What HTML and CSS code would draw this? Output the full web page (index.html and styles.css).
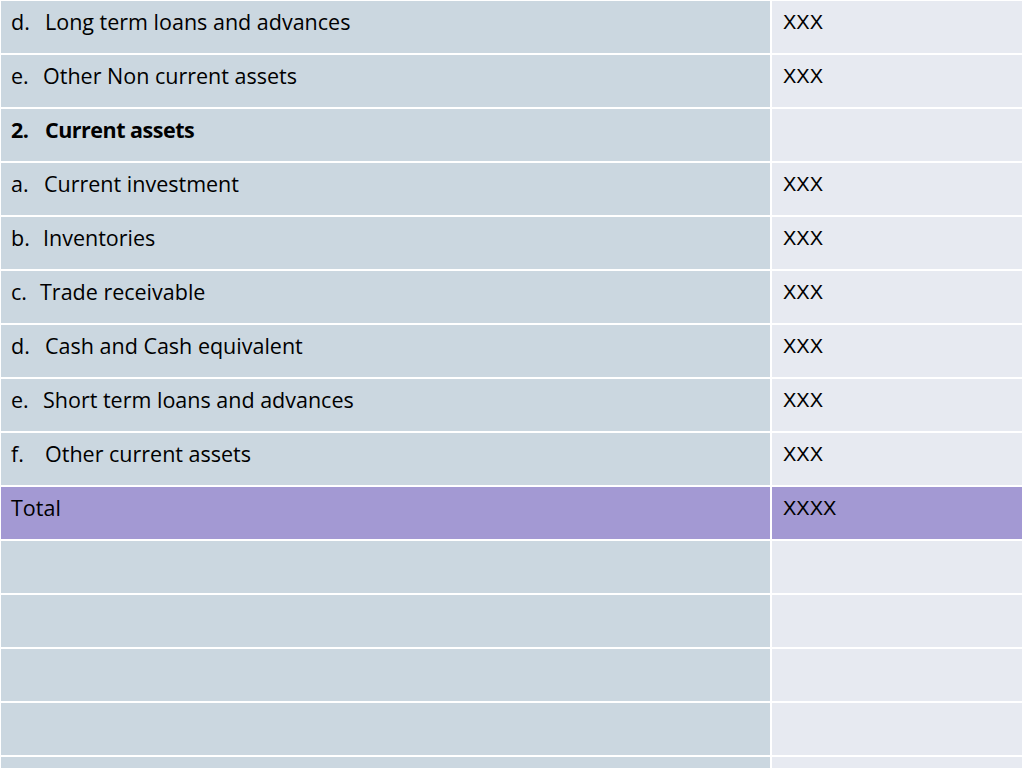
FILE: index.html
```html
<!DOCTYPE html>
<html lang="en">
<head>
<meta charset="utf-8">
<title>Current assets</title>
<link rel="stylesheet" href="styles.css">
</head>
<body>
<div class="table">
  <div class="cell label"><span class="mk">d.</span>Long term loans and advances</div>
  <div class="cell value">XXX</div>

  <div class="cell label"><span class="mk mk-e">e.</span>Other Non current assets</div>
  <div class="cell value">XXX</div>

  <div class="cell label bold"><span class="mk">2.</span>Current assets</div>
  <div class="cell value"></div>

  <div class="cell label"><span class="mk mk-a">a.</span>Current investment</div>
  <div class="cell value">XXX</div>

  <div class="cell label"><span class="mk mk-e">b.</span>Inventories</div>
  <div class="cell value">XXX</div>

  <div class="cell label"><span class="mk mk-c">c.</span>Trade receivable</div>
  <div class="cell value">XXX</div>

  <div class="cell label"><span class="mk">d.</span>Cash and Cash equivalent</div>
  <div class="cell value">XXX</div>

  <div class="cell label"><span class="mk mk-e">e.</span>Short term loans and advances</div>
  <div class="cell value">XXX</div>

  <div class="cell label"><span class="mk">f.</span>Other current assets</div>
  <div class="cell value">XXX</div>

  <div class="cell label total">Total</div>
  <div class="cell value total">XXXX</div>

  <div class="cell label"></div>
  <div class="cell value"></div>
  <div class="cell label"></div>
  <div class="cell value"></div>
  <div class="cell label"></div>
  <div class="cell value"></div>
  <div class="cell label"></div>
  <div class="cell value"></div>
  <div class="cell label"></div>
  <div class="cell value"></div>
</div>
</body>
</html>
```

FILE: styles.css
```css
html, body {
  margin: 0;
  padding: 0;
  background: #ffffff;
  overflow: hidden;
}

.table {
  display: grid;
  grid-template-columns: 769px 250px;
  grid-auto-rows: 52px;
  gap: 2px;
  padding: 1px 2px 0 1px;
  width: 1024px;
  box-sizing: border-box;
  background: #ffffff;
}

.cell {
  box-sizing: border-box;
  color: #000000;
  white-space: nowrap;
}

.label {
  background: #cbd7e0;
  font-family: "Open Sans", "Liberation Sans", sans-serif;
  font-size: 21.5px;
  line-height: 24px;
  padding: 9px 0 0 10px;
}

.value {
  background: #e7eaf1;
  font-family: "Liberation Sans", Arial, sans-serif;
  font-size: 20px;
  line-height: 24px;
  padding: 9px 0 0 11px;
}

.bold {
  font-weight: 700;
  letter-spacing: -0.5px;
}

.total {
  background: #a399d3;
}

.mk {
  display: inline-block;
  width: 34px;
}

.mk-e {
  width: 32px;
}

.mk-a {
  width: 33px;
}

.mk-c {
  width: 29px;
}
```
